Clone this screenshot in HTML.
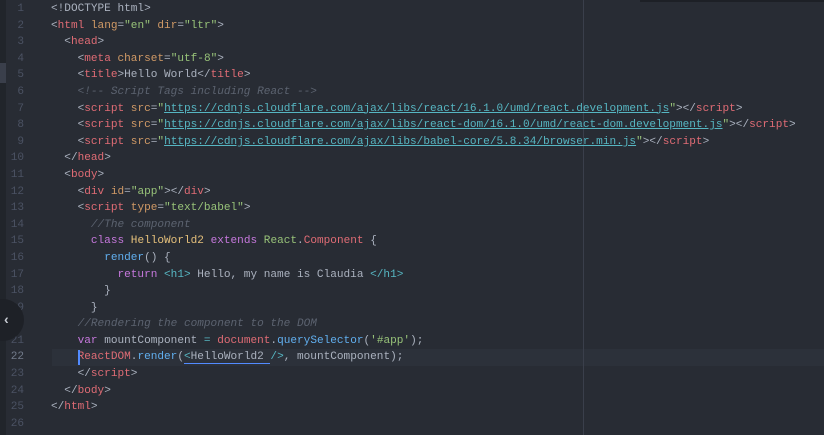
<!DOCTYPE html>
<html><head><meta charset="utf-8">
<style>
html,body{margin:0;padding:0;width:824px;height:435px;overflow:hidden;background:#282c34;}
body{position:relative;font-family:"Liberation Mono",monospace;font-size:11.08px;}
.strip{position:absolute;left:0;top:0;width:6px;height:435px;background:#21252b;}
.thumb{position:absolute;left:0;top:63px;width:6px;height:20px;background:#3a3f4b;}
.topbar{position:absolute;left:640px;top:0;width:184px;height:2px;background:#1d2026;}
.guide{position:absolute;left:583px;top:0;width:1px;height:435px;background:#3a3f4b;}
.active{position:absolute;left:52px;top:349px;width:772px;height:17px;background:#2c313a;}
.cursor{position:absolute;left:78px;top:350px;width:2px;height:15px;background:#528bff;}
.ln{position:absolute;left:0;width:24px;text-align:right;color:#4b5263;}
.code{position:absolute;left:51px;color:#abb2bf;}
.row{height:16.6px;line-height:16.6px;white-space:pre;}
.t{color:#e06c75}.a{color:#d19a66}.s{color:#98c379}.c{color:#5c6370;font-style:italic}
.u{color:#56b6c2;text-decoration:underline}.k{color:#c678dd}.y{color:#e5c07b}.f{color:#61afef}.cy{color:#56b6c2}
.circle{position:absolute;left:-18px;top:299px;width:42px;height:42px;border-radius:50%;background:#1e2127;color:#c8ccd4;}
.circle span{position:absolute;left:22px;top:12px;font-size:14px;font-family:"Liberation Sans",sans-serif;font-weight:bold;}
.ul{border-bottom:1px solid #528bff;}
</style></head><body>
<div class="strip"></div><div class="thumb"></div><div class="topbar"></div>
<div class="active"></div>
<div class="guide"></div>
<div class="ln" style="top:1px">
<div class="row">1</div><div class="row">2</div><div class="row">3</div><div class="row">4</div><div class="row">5</div><div class="row">6</div><div class="row">7</div><div class="row">8</div><div class="row">9</div><div class="row">10</div><div class="row">11</div><div class="row">12</div><div class="row">13</div><div class="row">14</div><div class="row">15</div><div class="row">16</div><div class="row">17</div><div class="row">18</div><div class="row">19</div><div class="row">20</div><div class="row">21</div><div class="row" style="color:#737c8c">22</div><div class="row">23</div><div class="row">24</div><div class="row">25</div><div class="row">26</div>
</div>
<div class="code" style="top:1px">
<div class="row">&lt;!DOCTYPE html&gt;</div>
<div class="row">&lt;<span class="t">html</span> <span class="a">lang</span>=<span class="s">"en"</span> <span class="a">dir</span>=<span class="s">"ltr"</span>&gt;</div>
<div class="row">  &lt;<span class="t">head</span>&gt;</div>
<div class="row">    &lt;<span class="t">meta</span> <span class="a">charset</span>=<span class="s">"utf-8"</span>&gt;</div>
<div class="row">    &lt;<span class="t">title</span>&gt;Hello World&lt;/<span class="t">title</span>&gt;</div>
<div class="row"><span class="c">    &lt;!-- Script Tags including React --&gt;</span></div>
<div class="row">    &lt;<span class="t">script</span> <span class="a">src</span>=<span class="s">"</span><span class="u">https://cdnjs.cloudflare.com/ajax/libs/react/16.1.0/umd/react.development.js</span><span class="s">"</span>&gt;&lt;/<span class="t">script</span>&gt;</div>
<div class="row">    &lt;<span class="t">script</span> <span class="a">src</span>=<span class="s">"</span><span class="u">https://cdnjs.cloudflare.com/ajax/libs/react-dom/16.1.0/umd/react-dom.development.js</span><span class="s">"</span>&gt;&lt;/<span class="t">script</span>&gt;</div>
<div class="row">    &lt;<span class="t">script</span> <span class="a">src</span>=<span class="s">"</span><span class="u">https://cdnjs.cloudflare.com/ajax/libs/babel-core/5.8.34/browser.min.js</span><span class="s">"</span>&gt;&lt;/<span class="t">script</span>&gt;</div>
<div class="row">  &lt;/<span class="t">head</span>&gt;</div>
<div class="row">  &lt;<span class="t">body</span>&gt;</div>
<div class="row">    &lt;<span class="t">div</span> <span class="a">id</span>=<span class="s">"app"</span>&gt;&lt;/<span class="t">div</span>&gt;</div>
<div class="row">    &lt;<span class="t">script</span> <span class="a">type</span>=<span class="s">"text/babel"</span>&gt;</div>
<div class="row"><span class="c">      //The component</span></div>
<div class="row">      <span class="k">class</span> <span class="y">HelloWorld2</span> <span class="k">extends</span> <span class="s">React</span>.<span class="t">Component</span> {</div>
<div class="row">        <span class="f">render</span>() {</div>
<div class="row">          <span class="k">return</span> <span class="cy">&lt;h1&gt;</span> Hello, my name is Claudia <span class="cy">&lt;/h1&gt;</span></div>
<div class="row">        }</div>
<div class="row">      }</div>
<div class="row"><span class="c">    //Rendering the component to the DOM</span></div>
<div class="row">    <span class="k">var</span> mountComponent <span class="cy">=</span> <span class="t">document</span>.<span class="f">querySelector</span>(<span class="s">'#app'</span>);</div>
<div class="row">    <span class="t">ReactDOM</span>.<span class="f">render</span>(<span class="ul"><span class="cy">&lt;</span>HelloWorld2 </span><span class="cy">/&gt;</span>, mountComponent);</div>
<div class="row">    &lt;/<span class="t">script</span>&gt;</div>
<div class="row">  &lt;/<span class="t">body</span>&gt;</div>
<div class="row">&lt;/<span class="t">html</span>&gt;</div>
<div class="row"> </div>
</div>
<div class="cursor"></div>
<div class="circle"><span>‹</span></div>
</body></html>
